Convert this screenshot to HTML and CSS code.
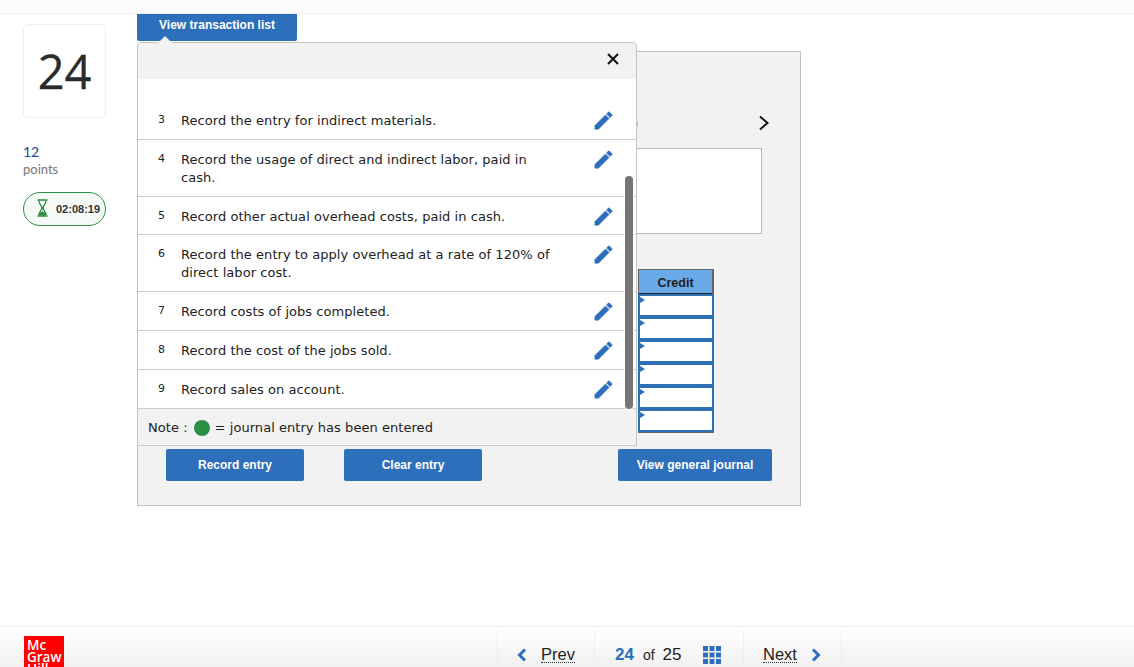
FILE: index.html
```html
<!DOCTYPE html>
<html lang="en">
<head>
<meta charset="utf-8">
<title>Question 24</title>
<link rel="stylesheet" href="styles.css">
</head>
<body>
<svg class="sprite" width="0" height="0" aria-hidden="true">
  <symbol id="pencil" viewBox="0 0 24 24"><path d="M3 17.25V21h3.75L17.81 9.94l-3.75-3.75L3 17.25zM20.71 7.04a1 1 0 0 0 0-1.41l-2.34-2.34a1 1 0 0 0-1.41 0l-1.83 1.83 3.75 3.75 1.83-1.83z"/></symbol>
</svg>
<div class="topbar"></div>
<div class="content">
  <aside class="side">
    <div class="qcard">24</div>
    <div class="pts">12</div>
    <div class="ptslabel">points</div>
    <div class="timer">
      <svg class="hourglass" width="11" height="18" viewBox="0 0 11 18"><path d="M1 1h9M1 17h9" stroke="#2b8a3e" stroke-width="1.500" stroke-linecap="round" fill="none"/><path d="M2 1.500c0 3.500 2.500 5 3 7.500-.5 2.500-3 4-3 7M9 1.500c0 3.500-2.500 5-3 7.500 .5 2.500 3 4 3 7" stroke="#2b8a3e" stroke-width="1.300" fill="none"/><path d="M1.500 16.500c.5-2.500 2.500-3.500 4-4 1.500.5 3.500 1.500 4 4z" fill="#2b8a3e"/></svg>
      <span>02:08:19</span>
    </div>
  </aside>
  <main class="main">
    <button class="btn tx-btn">View transaction list</button>
    <section class="panel">
      <div class="tabs"><span class="tab-end">)</span><svg class="chev" width="12" height="16" viewBox="0 0 12 16"><path d="M2 1.500 9.500 8 2 14.500" fill="none" stroke="#111" stroke-width="2"/></svg></div>
      <div class="prompt"></div>
      <div class="credit">
        <div class="credit-head">Credit</div>
        <div class="cell"></div><div class="cell"></div><div class="cell"></div><div class="cell"></div><div class="cell"></div><div class="cell"></div>
      </div>
      <div class="actions">
        <button class="btn act">Record entry</button>
        <button class="btn act act-clear">Clear entry</button>
        <button class="btn act act-view">View general journal</button>
      </div>
    </section>
    <div class="modal">
      <div class="modal-head"><svg width="12" height="12" viewBox="0 0 12 12"><path d="M1 1l10 10M11 1 1 11" stroke="#111" stroke-width="2"/></svg></div>
      <div class="modal-body">
        <div class="row"><span class="num">3</span><span class="txt">Record the entry for indirect materials.</span><svg class="pen"><use href="#pencil"/></svg></div>
        <div class="row"><span class="num">4</span><span class="txt">Record the usage of direct and indirect labor, paid in cash.</span><svg class="pen"><use href="#pencil"/></svg></div>
        <div class="row row-tight"><span class="num">5</span><span class="txt">Record other actual overhead costs, paid in cash.</span><svg class="pen"><use href="#pencil"/></svg></div>
        <div class="row"><span class="num">6</span><span class="txt">Record the entry to apply overhead at a rate of 120% of direct labor cost.</span><svg class="pen"><use href="#pencil"/></svg></div>
        <div class="row"><span class="num">7</span><span class="txt">Record costs of jobs completed.</span><svg class="pen"><use href="#pencil"/></svg></div>
        <div class="row"><span class="num">8</span><span class="txt">Record the cost of the jobs sold.</span><svg class="pen"><use href="#pencil"/></svg></div>
        <div class="row"><span class="num">9</span><span class="txt">Record sales on account.</span><svg class="pen"><use href="#pencil"/></svg></div>
        <div class="thumb"></div>
      </div>
      <div class="note">Note :<span class="dot"></span>= journal entry has been entered</div>
    </div>
  </main>
</div>
<footer class="footer">
  <div class="logo">Mc<br>Graw<br>Hill</div>
  <nav class="pager">
    <div class="pg pg-prev"><svg width="10" height="14" viewBox="0 0 10 14"><path d="M8 1.500 2.500 7 8 12.500" fill="none" stroke="#2d6fbb" stroke-width="3"/></svg><span class="link">Prev</span></div>
    <div class="pg pg-num"><b>24</b><span class="of">of</span><span>25</span>
      <svg class="grid" width="18" height="18" viewBox="0 0 18 18" fill="#2d6fbb"><path d="M0 0h5v5H0zM6.500 0h5v5h-5zM13 0h5v5h-5zM0 6.500h5v5H0zM6.500 6.500h5v5h-5zM13 6.500h5v5h-5zM0 13h5v5H0zM6.500 13h5v5h-5zM13 13h5v5h-5z"/></svg>
    </div>
    <div class="pg pg-next"><span class="link">Next</span><svg width="10" height="14" viewBox="0 0 10 14"><path d="M2 1.500 7.500 7 2 12.500" fill="none" stroke="#2d6fbb" stroke-width="3"/></svg></div>
  </nav>
</footer>
</body>
</html>
```
FILE: styles.css
```css
* { box-sizing: border-box; }
html, body { margin: 0; height: 667px; overflow: hidden; background: #fff; }
body { display: flex; flex-direction: column; font-family: "Liberation Sans", Arial, sans-serif; color: #222; }
.sprite { position: absolute; }
.topbar { height: 14px; flex: none; background: #fcfcfc; border-bottom: 1px solid #ececec; }
.content { flex: 1; display: flex; min-height: 0; }

.side { width: 83px; margin: 10px 0 0 23px; flex: none; }
.qcard { height: 94px; border: 1px solid #eee; border-radius: 5px; display: flex; align-items: center; justify-content: center; font: 47px/1 "Open Sans", sans-serif; color: #2a2a2a; -webkit-text-stroke: .3px #2a2a2a; }
.pts { margin-top: 25px; font: 14px/17px Lato, sans-serif; color: #1c4a8c; }
.ptslabel { font: 13px/17px Lato, sans-serif; color: #777; margin-top: 1px; }
.timer { margin-top: 14px; height: 34px; border: 1px solid #2f8f46; border-radius: 17px; background: #f5faf6; display: flex; align-items: center; gap: 8px; padding-left: 13px; font-size: 11px; font-weight: 700; color: #333; }
.hourglass { flex: none; margin-bottom: 3px; }

.main { position: relative; margin-left: 31px; width: 664px; flex: none; }
.btn { border: 0; border-radius: 2px; background: #2d6fbb; color: #fff; font: 700 12px/1 "Liberation Sans", Arial, sans-serif; padding: 0; }
.tx-btn { display: block; width: 160px; height: 27px; padding-bottom: 6px; border-radius: 0 0 2px 2px; }

.panel { margin-top: 10px; height: 455px; background: #f2f2f2; border: 1px solid #c0c0c0; padding: 0 28px; display: flex; flex-direction: column; }
.tabs { display: flex; justify-content: flex-end; align-items: center; margin-top: 62px; margin-right: 2px; height: 18px; }
.tab-end { font-size: 11px; color: #333; margin-right: 120px; }
.chev { flex: none; }
.prompt { margin: 16px 10px 0 0; height: 86px; background: #fff; border: 1px solid #b8b8b8; }
.credit { align-self: flex-end; margin: 35px 58px 0 0; width: 76px; background: #666; padding: 0 1px 1px 0; }
.credit-head { height: 25px; background: #6aa9e8; border: 1px solid #666; border-bottom-color: #222; font-size: 12.500px; font-weight: 700; line-height: 26px; text-align: center; color: #222; }
.cell { position: relative; height: 23px; background: #fff; border: 2px solid #2f6fb5; border-right-width: 1px; }
.cell::before { content: ""; position: absolute; left: 0; top: 1px; border-left: 5px solid #2f6fb5; border-top: 3px solid transparent; border-bottom: 3px solid transparent; }
.actions { display: flex; margin-top: 16px; }
.act { width: 138px; height: 32px; }
.act-clear { margin-left: 40px; }
.act-view { width: 154px; margin-left: 136px; }

.modal { position: absolute; left: 0; top: 28px; width: 500px; height: 404px; background: #fff; border: 1px solid #c4c4c4; border-radius: 4px 4px 0 0; font: 13px/18px "DejaVu Sans", Verdana, sans-serif; letter-spacing: .05px; color: #222; }
.modal::before { content: ""; position: absolute; left: 20px; top: -7px; border-left: 7px solid transparent; border-right: 7px solid transparent; border-bottom: 7px solid #f2f2f2; }
.modal-head { height: 36px; background: #f2f2f2; display: flex; justify-content: flex-end; align-items: center; padding: 0 17px 4px 0; border-radius: 4px 4px 0 0; }
.modal-body { position: relative; padding-top: 22px; }
.row { display: flex; align-items: flex-start; padding: 10px 0; border-bottom: 1px solid #ccc; }
.row-tight { padding-bottom: 9px; }
.num { width: 43px; padding-left: 20px; font-size: 11px; flex: none; }
.txt { width: 386px; flex: none; padding: 1px 10px 0 0; margin-bottom: -1px; }
.pen { width: 23px; height: 23px; margin: -2px 0 -3px 25px; fill: #2d6fbb; stroke: #2d6fbb; stroke-width: .6px; flex: none; }
.thumb { position: absolute; right: 3px; top: 97px; width: 8px; height: 233px; border-radius: 4px; background: #757575; box-shadow: 0 0 0 1px #fff; }
.note { height: 37px; padding: 1px 0 0 10px; background: #f2f2f2; display: flex; align-items: center; border-bottom: 1px solid #ccc; }
.dot { width: 16px; height: 16px; margin: 0 5px 0 6px; border-radius: 50%; background: #2b8f46; }

.footer { height: 41px; flex: none; overflow: hidden; border-top: 1px solid #eee; background: linear-gradient(#fff, #f1f1f1); display: flex; position: relative; }
.logo { margin: 9px 0 0 24px; width: 40px; height: 50px; padding: 3px 0 0 3px; background: #f00; color: #fff; font: 600 13.500px/12px "Open Sans", sans-serif; }
.pager { display: flex; margin: 4px 0 0 433px; height: 40px; border-left: 1px solid #eee; }
.pg { display: flex; align-items: center; border-right: 1px solid #eee; font-size: 16.500px; height: 100%; padding-top: 8px; color: #222; }
.pg-prev { width: 97px; padding-left: 19px; gap: 14px; }
.pg-num { width: 149px; padding-left: 20px; font-size: 17px; }
.pg-num b { color: #2d6fbb; }
.of { font-size: 14px; margin: 0 8px 0 9px; }
.grid { margin-left: 21px; }
.pg-next { width: 98px; padding-left: 19px; gap: 14px; }
.link { border-bottom: 1px dotted #333; line-height: 15px; }
```
